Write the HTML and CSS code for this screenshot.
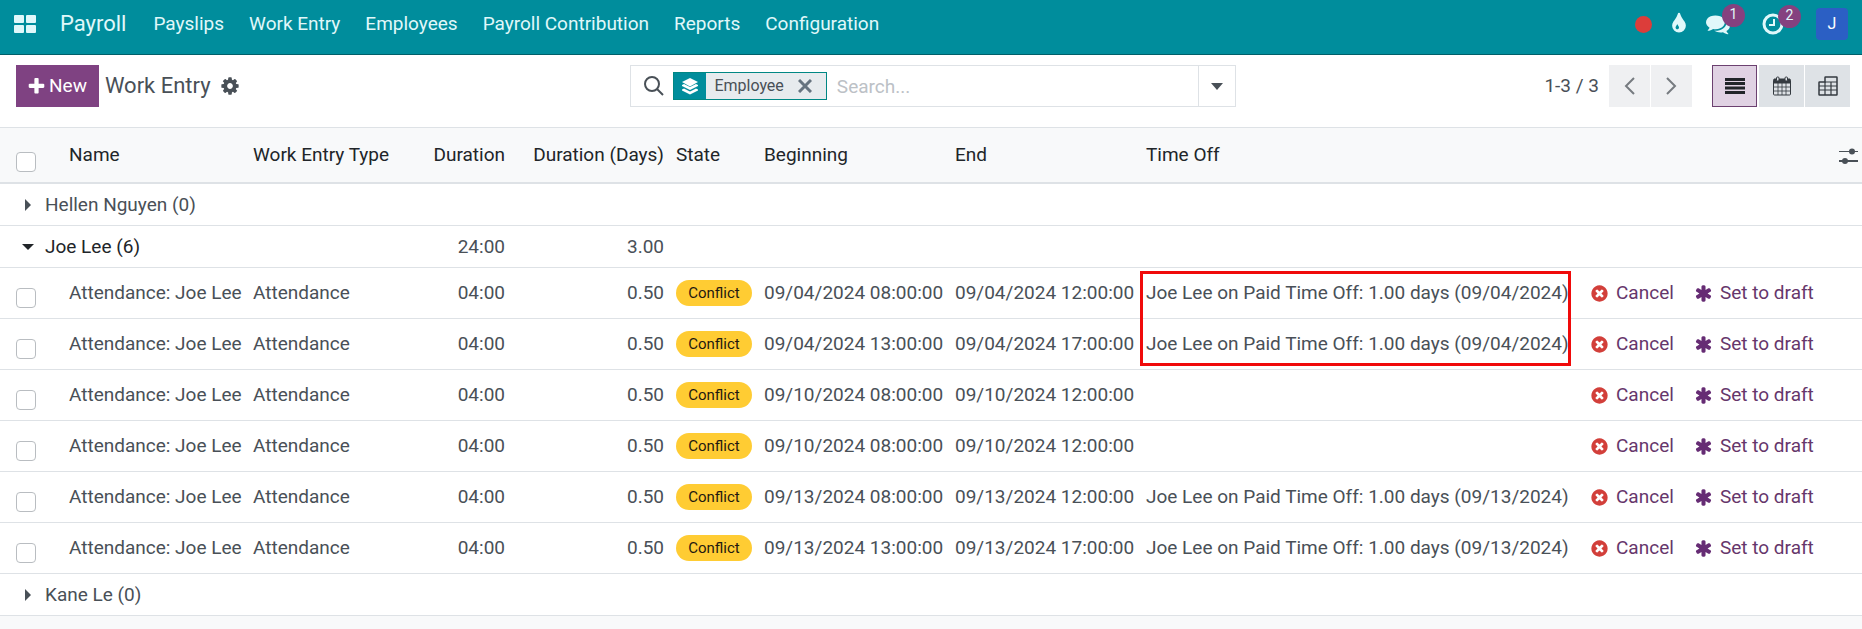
FILE: index.html
```html
<!DOCTYPE html>
<html lang="en">
<head>
    <meta charset="UTF-8">
    <meta name="viewport" content="width=device-width, initial-scale=1.0">
    <title>Payroll - Work Entry</title>
    <link rel="stylesheet" href="styles.css">
</head>
<body>

    <!-- Shared icons -->
    <svg class="iconDefs" aria-hidden="true">
        <symbol id="icon-cancel" viewBox="0 0 1792 1792"><path d="M1277 1122q0-26-19-45l-181-181 181-181q19-19 19-45 0-27-19-46l-90-90q-19-19-46-19-26 0-45 19l-181 181-181-181q-19-19-45-19-27 0-46 19l-90 90q-19 19-19 46 0 26 19 45l181 181-181 181q-19 19-19 45 0 27 19 46l90 90q19 19 46 19 26 0 45-19l181-181 181 181q19 19 45 19 27 0 46-19l90-90q19-19 19-46zm387-226q0 209-103 385.5t-279.5 279.5-385.5 103-385.5-103-279.5-279.5-103-385.5 103-385.5 279.5-279.5 385.5-103 385.5 103 279.5 279.5 103 385.5z"/></symbol>
        <symbol id="icon-asterisk" viewBox="0 0 1792 1792"><path d="M1546 1050q46 26 59.5 77.5t-12.5 97.5l-64 110q-26 46-77.5 59.5t-97.5-12.5l-266-153v307q0 52-38 90t-90 38h-128q-52 0-90-38t-38-90v-307l-266 153q-46 26-97.5 12.5t-77.5-59.5l-64-110q-26-46-12.5-97.5t59.5-77.5l266-154-266-154q-46-26-59.5-77.5t12.5-97.5l64-110q26-46 77.5-59.5t97.5 12.5l266 153v-307q0-52 38-90t90-38h128q52 0 90 38t38 90v307l266-153q46-26 97.5-12.5t77.5 59.5l64 110q26 46 12.5 97.5t-59.5 77.5l-266 154z"/></symbol>
    </svg>

    <header class="navbar">
        <a href="#" class="appsMenu" aria-label="Apps">
            <svg width="22" height="18" viewBox="0 0 22 18" fill="currentColor"><rect width="10" height="8" rx="1"/><rect x="12" width="10" height="8" rx="1"/><rect y="10" width="10" height="8" rx="1"/><rect x="12" y="10" width="10" height="8" rx="1"/></svg>
        </a>
        <a href="#" class="brand">Payroll</a>
        <nav class="menu">
            <a href="#">Payslips</a>
            <a href="#">Work Entry</a>
            <a href="#">Employees</a>
            <a href="#">Payroll Contribution</a>
            <a href="#">Reports</a>
            <a href="#">Configuration</a>
        </nav>
        <div class="systray">
            <span class="recordDot"></span>
            <a href="#" aria-label="Theme">
                <svg width="24" height="24" viewBox="0 0 1792 1792" fill="currentColor"><path d="M896 1152q0-36-20-69-1-1-15.5-22.5t-25.5-38-25-44-21-50.5q-4-16-21-16t-21 16q-7 23-21 50.5t-25 44-25.5 38-15.5 22.5q-20 33-20 69 0 53 37.5 90.5t90.5 37.5 90.5-37.5 37.5-90.5zm512-128q0 212-150 362t-362 150-362-150-150-362q0-145 81-275 6-9 62.5-90.5t101-151 99.5-178 83-201.5q9-30 34-47t51-17 51.5 17 33.5 47q28 93 83 201.5t99.5 178 101 151 62.5 90.5q81 127 81 275z"/></svg>
            </a>
            <a href="#" class="tray" aria-label="Messages">
                <svg width="24" height="24" viewBox="0 0 1792 1792" fill="currentColor"><path d="M1408 768q0 139-94 257t-256.5 186.5-353.5 68.5q-86 0-176-16-124 88-278 128-36 9-86 16h-3q-11 0-20.5-8t-11.5-21q-1-3-1-6.5t.5-6.5 2-6l2.5-5 3.5-5.5 4-5 4.5-5 4-4.5q5-6 23-25t26-29.5 22.5-29 25-38.5 20.5-44q-124-72-195-177t-71-224q0-139 94-257t256.5-186.5 353.5-68.5 353.5 68.5 256.5 186.5 94 257zm384 256q0 120-71 224.5t-195 176.5q10 24 20.5 44t25 38.5 22.5 29 26 29.5 23 25q1 1 4 4.5t4.5 5 4 5 3.5 5.5l2.5 5 2 6 .5 6.5-1 6.5q-3 14-13 22t-22 7q-50-7-86-16-154-40-278-128-90 16-176 16-271 0-472-132 58 4 88 4 161 0 309-45t264-129q125-92 192-212t67-254q0-77-23-152 129 71 204 178t75 230z"/></svg>
                <span class="counter">1</span>
            </a>
            <a href="#" class="tray" aria-label="Activities">
                <svg width="22" height="22" viewBox="0 0 22 22" fill="none" stroke="currentColor"><circle cx="11" cy="11" r="9" stroke-width="3"/><path d="M12 6v6H7" stroke-width="2"/></svg>
                <span class="counter">2</span>
            </a>
            <a href="#" class="avatar">J</a>
        </div>
    </header>

    <div class="controlPanel">
        <div class="breadcrumb">
            <button type="button" class="newButton">
                <svg width="17" height="17" viewBox="128 128 1536 1536" fill="currentColor"><path d="M1600 736v192q0 40-28 68t-68 28h-416v416q0 40-28 68t-68 28h-192q-40 0-68-28t-28-68v-416h-416q-40 0-68-28t-28-68v-192q0-40 28-68t68-28h416v-416q0-40 28-68t68-28h192q40 0 68 28t28 68v416h416q40 0 68 28t28 68z"/></svg>New</button>
            <h1>Work Entry</h1>
            <button type="button" class="gear" aria-label="Actions">
                <svg width="18" height="18" viewBox="96 96 1600 1600" fill="currentColor"><path d="M1152 896q0-106-75-181t-181-75-181 75-75 181 75 181 181 75 181-75 75-181zm512-109v222q0 12-8 23t-20 13l-185 28q-19 54-39 91 35 50 107 138 10 12 10 25t-9 23q-27 37-99 108t-94 71q-12 0-26-9l-138-108q-44 23-91 38-16 136-29 186-7 28-36 28h-222q-14 0-24.5-8.5t-11.5-21.5l-28-184q-49-16-90-37l-141 107q-10 9-25 9-14 0-25-11-126-114-165-168-7-10-7-23 0-12 8-23 15-21 51-66.5t54-70.5q-27-50-41-99l-183-27q-13-2-21-12.5t-8-23.5v-222q0-12 8-23t19-13l186-28q14-46 39-92-40-57-107-138-10-12-10-24 0-10 9-23 26-36 98.5-107.5t94.5-71.5q13 0 26 10l138 107q44-23 91-38 16-136 29-186 7-28 36-28h222q14 0 24.5 8.5t11.5 21.5l28 184q49 16 90 37l142-107q9-9 24-9 13 0 25 10 129 119 165 170 7 8 7 22 0 12-8 23-15 21-51 66.5t-54 70.5q26 50 41 98l183 28q13 2 21 12.5t8 23.5z"/></svg>
            </button>
        </div>

        <div class="searchBar">
            <svg class="searchIcon" width="20" height="20" viewBox="0 0 20 20" fill="none" stroke="currentColor"><circle cx="8" cy="8" r="7" stroke-width="2"/><path d="M13 13l6 6" stroke-width="2"/></svg>
            <div class="facet">
                <span class="facetIcon">
                    <svg width="16" height="17" viewBox="0 0 16 17" fill="currentColor"><path d="M8 0l8 4-8 4.500-8-4.500z"/><path d="M0 7l2-1 6 3 6-3 2 1v1l-8 4-8-4z"/><path d="M0 11.500l2-1 6 3 6-3 2 1v1l-8 4-8-4z"/></svg>
                </span>
                <span class="facetLabel">Employee</span>
                <button type="button" class="facetRemove" aria-label="Remove">
                    <svg width="14" height="14" viewBox="0 0 14 14" fill="none" stroke="currentColor" stroke-width="3"><path d="M1 1l12 12M13 1L1 13"/></svg>
                </button>
            </div>
            <input type="text" placeholder="Search..." aria-label="Search">
            <button type="button" class="searchToggle" aria-label="Search options">
                <svg width="12" height="7" viewBox="0 0 12 7" fill="currentColor"><path d="M0 0h12L6 7z"/></svg>
            </button>
        </div>

        <div class="panelRight">
            <span class="pagerText">1-3 / 3</span>
            <div class="pager">
                <button type="button" aria-label="Previous">
                    <svg width="11" height="18" viewBox="0 0 11 18" fill="none" stroke="currentColor" stroke-width="2"><path d="M10 1L2 9l8 8"/></svg>
                </button>
                <button type="button" aria-label="Next">
                    <svg width="11" height="18" viewBox="0 0 11 18" fill="none" stroke="currentColor" stroke-width="2"><path d="M1 1l8 8-8 8"/></svg>
                </button>
            </div>
            <div class="viewSwitch">
                <button type="button" class="active" aria-label="List view">
                    <svg width="20" height="16" viewBox="0 0 20 16" fill="currentColor"><path d="M0 0h20v3H0zM0 4h20v3H0zM0 8.500h20v3H0zM0 13h20v3H0z"/></svg>
                </button>
                <button type="button" aria-label="Calendar view">
                    <svg width="18" height="20" viewBox="0 0 18 20" fill="none" stroke="currentColor"><rect x=".5" y="3.500" width="17" height="15.500" rx="1"/><path d="M1 3h16v4H1z" fill="currentColor"/><path d="M5 7v12M9 7v12M13 7v12M1 11h16M1 15h16" stroke-width=".8"/><rect x="3.500" y="1" width="2.500" height="4" rx="1" fill="#dee2e6"/><rect x="12" y="1" width="2.500" height="4" rx="1" fill="#dee2e6"/></svg>
                </button>
                <button type="button" aria-label="Grid view">
                    <svg width="20" height="20" viewBox="0 0 20 20" fill="none" stroke="currentColor"><path d="M7 6V1.500q0-.5.5-.5h11q.5 0 .5.500v17q0 .5-.5.500H1.500q-.5 0-.5-.5v-12q0-.5.5-.5z" stroke-width="1.500"/><path d="M1 10h18M1 14h18M7 6v13M13 6v13M7 6h12" stroke-width="1.200"/></svg>
                </button>
            </div>
        </div>
    </div>

    <table class="listView">
        <colgroup>
            <col class="colCheck">
            <col class="colName">
            <col class="colType">
            <col class="colDuration">
            <col class="colDays">
            <col class="colState">
            <col class="colDate">
            <col class="colDate">
            <col class="colTimeOff">
            <col class="colCancel">
            <col class="colDraft">
            <col class="colOptions">
        </colgroup>
        <thead>
            <tr>
                <th class="check"><input type="checkbox" aria-label="Select all"></th>
                <th>Name</th>
                <th>Work Entry Type</th>
                <th class="number">Duration</th>
                <th class="number">Duration (Days)</th>
                <th>State</th>
                <th>Beginning</th>
                <th>End</th>
                <th>Time Off</th>
                <th></th>
                <th></th>
                <th class="options">
                    <button type="button" aria-label="Optional columns">
                        <svg width="19" height="16" viewBox="0 0 19 16" fill="currentColor"><path d="M0 3h19v1H0zM0 12h19v2H0z"/><circle cx="13" cy="3.500" r="3"/><circle cx="6" cy="13" r="3"/></svg>
                    </button>
                </th>
            </tr>
        </thead>
        <tbody>
            <tr class="group">
                <td colspan="3"><button type="button"><svg width="16" height="12" viewBox="0 0 16 12" fill="currentColor"><path d="M5 0l6 6-6 6z"/></svg>Hellen Nguyen (0)</button></td>
                <td></td>
                <td></td>
                <td colspan="7"></td>
            </tr>
            <tr class="group open">
                <td colspan="3"><button type="button"><svg width="16" height="12" viewBox="0 0 16 12" fill="currentColor"><path d="M2 3h12L8 9z"/></svg>Joe Lee (6)</button></td>
                <td class="number">24:00</td>
                <td class="number">3.00</td>
                <td colspan="7"></td>
            </tr>
            <tr>
                <td class="check"><input type="checkbox" aria-label="Select entry"></td>
                <td>Attendance: Joe Lee</td>
                <td>Attendance</td>
                <td class="number">04:00</td>
                <td class="number">0.50</td>
                <td><span class="badge">Conflict</span></td>
                <td>09/04/2024 08:00:00</td>
                <td>09/04/2024 12:00:00</td>
                <td class="marked">Joe Lee on Paid Time Off: 1.00 days (09/04/2024)</td>
                <td><button type="button" class="rowAction cancel"><svg width="19" height="19"><use href="#icon-cancel"/></svg>Cancel</button></td>
                <td><button type="button" class="rowAction"><svg width="19" height="19"><use href="#icon-asterisk"/></svg>Set to draft</button></td>
                <td></td>
            </tr>
            <tr>
                <td class="check"><input type="checkbox" aria-label="Select entry"></td>
                <td>Attendance: Joe Lee</td>
                <td>Attendance</td>
                <td class="number">04:00</td>
                <td class="number">0.50</td>
                <td><span class="badge">Conflict</span></td>
                <td>09/04/2024 13:00:00</td>
                <td>09/04/2024 17:00:00</td>
                <td>Joe Lee on Paid Time Off: 1.00 days (09/04/2024)</td>
                <td><button type="button" class="rowAction cancel"><svg width="19" height="19"><use href="#icon-cancel"/></svg>Cancel</button></td>
                <td><button type="button" class="rowAction"><svg width="19" height="19"><use href="#icon-asterisk"/></svg>Set to draft</button></td>
                <td></td>
            </tr>
            <tr>
                <td class="check"><input type="checkbox" aria-label="Select entry"></td>
                <td>Attendance: Joe Lee</td>
                <td>Attendance</td>
                <td class="number">04:00</td>
                <td class="number">0.50</td>
                <td><span class="badge">Conflict</span></td>
                <td>09/10/2024 08:00:00</td>
                <td>09/10/2024 12:00:00</td>
                <td></td>
                <td><button type="button" class="rowAction cancel"><svg width="19" height="19"><use href="#icon-cancel"/></svg>Cancel</button></td>
                <td><button type="button" class="rowAction"><svg width="19" height="19"><use href="#icon-asterisk"/></svg>Set to draft</button></td>
                <td></td>
            </tr>
            <tr>
                <td class="check"><input type="checkbox" aria-label="Select entry"></td>
                <td>Attendance: Joe Lee</td>
                <td>Attendance</td>
                <td class="number">04:00</td>
                <td class="number">0.50</td>
                <td><span class="badge">Conflict</span></td>
                <td>09/10/2024 08:00:00</td>
                <td>09/10/2024 12:00:00</td>
                <td></td>
                <td><button type="button" class="rowAction cancel"><svg width="19" height="19"><use href="#icon-cancel"/></svg>Cancel</button></td>
                <td><button type="button" class="rowAction"><svg width="19" height="19"><use href="#icon-asterisk"/></svg>Set to draft</button></td>
                <td></td>
            </tr>
            <tr>
                <td class="check"><input type="checkbox" aria-label="Select entry"></td>
                <td>Attendance: Joe Lee</td>
                <td>Attendance</td>
                <td class="number">04:00</td>
                <td class="number">0.50</td>
                <td><span class="badge">Conflict</span></td>
                <td>09/13/2024 08:00:00</td>
                <td>09/13/2024 12:00:00</td>
                <td>Joe Lee on Paid Time Off: 1.00 days (09/13/2024)</td>
                <td><button type="button" class="rowAction cancel"><svg width="19" height="19"><use href="#icon-cancel"/></svg>Cancel</button></td>
                <td><button type="button" class="rowAction"><svg width="19" height="19"><use href="#icon-asterisk"/></svg>Set to draft</button></td>
                <td></td>
            </tr>
            <tr>
                <td class="check"><input type="checkbox" aria-label="Select entry"></td>
                <td>Attendance: Joe Lee</td>
                <td>Attendance</td>
                <td class="number">04:00</td>
                <td class="number">0.50</td>
                <td><span class="badge">Conflict</span></td>
                <td>09/13/2024 13:00:00</td>
                <td>09/13/2024 17:00:00</td>
                <td>Joe Lee on Paid Time Off: 1.00 days (09/13/2024)</td>
                <td><button type="button" class="rowAction cancel"><svg width="19" height="19"><use href="#icon-cancel"/></svg>Cancel</button></td>
                <td><button type="button" class="rowAction"><svg width="19" height="19"><use href="#icon-asterisk"/></svg>Set to draft</button></td>
                <td></td>
            </tr>
            <tr class="group">
                <td colspan="3"><button type="button"><svg width="16" height="12" viewBox="0 0 16 12" fill="currentColor"><path d="M5 0l6 6-6 6z"/></svg>Kane Le (0)</button></td>
                <td></td>
                <td></td>
                <td colspan="7"></td>
            </tr>
        </tbody>
    </table>

</body>
</html>
```
FILE: styles.css
```css
* {
    box-sizing: border-box;
}

body {
    margin: 0;
    font-family: Roboto, sans-serif;
    font-size: 19px;
    line-height: 26px;
    color: #495057;
    background-color: #f8f9fa;
}

button {
    font: inherit;
    color: inherit;
    border: 0;
    padding: 0;
    background: none;
    cursor: pointer;
}

a {
    color: inherit;
    text-decoration: none;
}

svg {
    display: block;
    flex-shrink: 0;
}

.iconDefs {
    display: none;
}

/* Top bar */
.navbar {
    display: flex;
    align-items: center;
    height: 55px;
    padding: 0 14px 6px;
    background-color: #008d9c;
    border-bottom: 1px solid #005f69;
    color: #e0f8fa;
}

.brand {
    margin-left: 24px;
    font-size: 22px;
}

.menu {
    display: flex;
    gap: 25px;
    margin-left: 27px;
}

.systray {
    display: flex;
    align-items: center;
    margin-left: auto;
    gap: 15px;
}

.recordDot {
    width: 17px;
    height: 17px;
    border-radius: 50%;
    background-color: #dc3d3a;
}

.tray {
    position: relative;
    margin-right: 17px;
}

.counter {
    position: absolute;
    top: -8px;
    left: 16px;
    width: 23px;
    height: 23px;
    border-radius: 50%;
    background-color: #85417f;
    font-size: 14px;
    line-height: 20px;
    text-align: center;
}

.avatar {
    width: 32px;
    height: 32px;
    border-radius: 4px;
    background-color: #2b5fc4;
    color: white;
    font-size: 16px;
    line-height: 32px;
    text-align: center;
}

/* Control panel */
.controlPanel {
    display: grid;
    grid-template-columns: 1fr 33% 1fr;
    padding: 10px 12px 20px 16px;
    background-color: white;
}

.breadcrumb {
    display: flex;
    align-items: center;
}

.newButton {
    display: flex;
    align-items: center;
    gap: 4px;
    height: 42px;
    padding: 0 12px;
    background-color: #7f4282;
    color: white;
}

.breadcrumb h1 {
    margin: 0 10px 0 6px;
    font-size: 22px;
    font-weight: 400;
}

.searchBar {
    display: flex;
    align-items: center;
    height: 42px;
    border: 1px solid #dee2e6;
}

.searchIcon {
    margin: 0 9px 0 13px;
}

.facet {
    display: flex;
    align-items: center;
    height: 28px;
    border: 1px solid #008784;
    background-color: #e7ebee;
    font-size: 16px;
}

.facetIcon {
    display: flex;
    align-items: center;
    align-self: stretch;
    padding: 0 8px;
    background-color: #008d9c;
    color: white;
}

.facetLabel {
    margin: 0 14px 0 8px;
}

.facetRemove {
    margin-right: 14px;
    color: #66737f;
}

.searchBar input {
    flex: 1;
    min-width: 0;
    height: 28px;
    padding: 0 10px;
    border: 0;
    outline: 0;
    background: none;
    font: inherit;
}

.searchBar input::placeholder {
    color: #bcc1c6;
}

.searchToggle {
    display: flex;
    align-items: center;
    justify-content: center;
    align-self: stretch;
    width: 37px;
    border-left: 1px solid #dee2e6;
}

.panelRight {
    display: flex;
    align-items: center;
    justify-content: flex-end;
}

.pager,
.viewSwitch {
    display: flex;
    gap: 1px;
}

.pager {
    margin: 0 20px 0 10px;
}

.pager button,
.viewSwitch button {
    display: flex;
    align-items: center;
    justify-content: center;
    height: 42px;
}

.pager button {
    width: 41px;
    background-color: #eff0f2;
    color: #767b80;
}

.viewSwitch button {
    width: 45px;
    background-color: #dee2e6;
    color: #343a40;
}

.viewSwitch .active {
    margin-right: 1px;
    border: 1px solid #6c4170;
    background-color: #e0d2e3;
    color: #212529;
}

/* List */
.listView {
    width: 100%;
    table-layout: fixed;
    border-collapse: separate;
    border-spacing: 0;
    background-color: white;
}

.colCheck { width: 63px; }
.colName { width: 184px; }
.colType { width: 150px; }
.colDuration { width: 114px; }
.colDays { width: 159px; }
.colState { width: 88px; }
.colDate { width: 191px; }
.colCancel { width: 104px; }
.colDraft { width: 134px; }
.colOptions { width: 40px; }

.listView th,
.listView td {
    padding: 0 6px;
    border-bottom: 1px solid #dee2e6;
    text-align: left;
    white-space: nowrap;
}

.listView th {
    height: 57px;
    border-top: 1px solid #dee2e6;
    border-bottom-width: 2px;
    background-color: #f8f9fa;
    color: #212529;
    font-weight: 400;
}

.listView td {
    height: 51px;
}

.listView .number {
    text-align: right;
}

.listView .check {
    padding: 10px 0 0 16px;
}

.listView th.check {
    padding-top: 14px;
}

.check input {
    display: block;
    appearance: none;
    width: 20px;
    height: 20px;
    margin: 0;
    border: 1px solid #b9bdc1;
    border-radius: 4px;
    background-color: white;
}

.listView .options {
    padding: 2px 4px 0 0;
}

.options button {
    display: block;
    margin-left: auto;
    color: #495057;
}

.listView .group td {
    height: 42px;
}

.listView .group td:first-child {
    padding-left: 20px;
}

.group button {
    display: flex;
    align-items: center;
    gap: 9px;
}

.group.open button {
    color: #212529;
}

.badge {
    display: block;
    width: 76px;
    border-radius: 13px;
    background-color: #ffcc33;
    color: #1f1a10;
    font-size: 15px;
    line-height: 26px;
    text-align: center;
}

.rowAction {
    display: flex;
    align-items: center;
    gap: 7px;
    color: #66366b;
}

.rowAction svg {
    fill: #662c74;
}

.cancel svg {
    fill: #d23f3a;
}

/* Frame around the overlapping time off entries */
.marked {
    position: relative;
}

.marked::after {
    content: "";
    box-sizing: border-box;
    position: absolute;
    top: 3px;
    left: 0;
    width: 431px;
    height: 95px;
    border: 3px solid #f00a0a;
}
```
